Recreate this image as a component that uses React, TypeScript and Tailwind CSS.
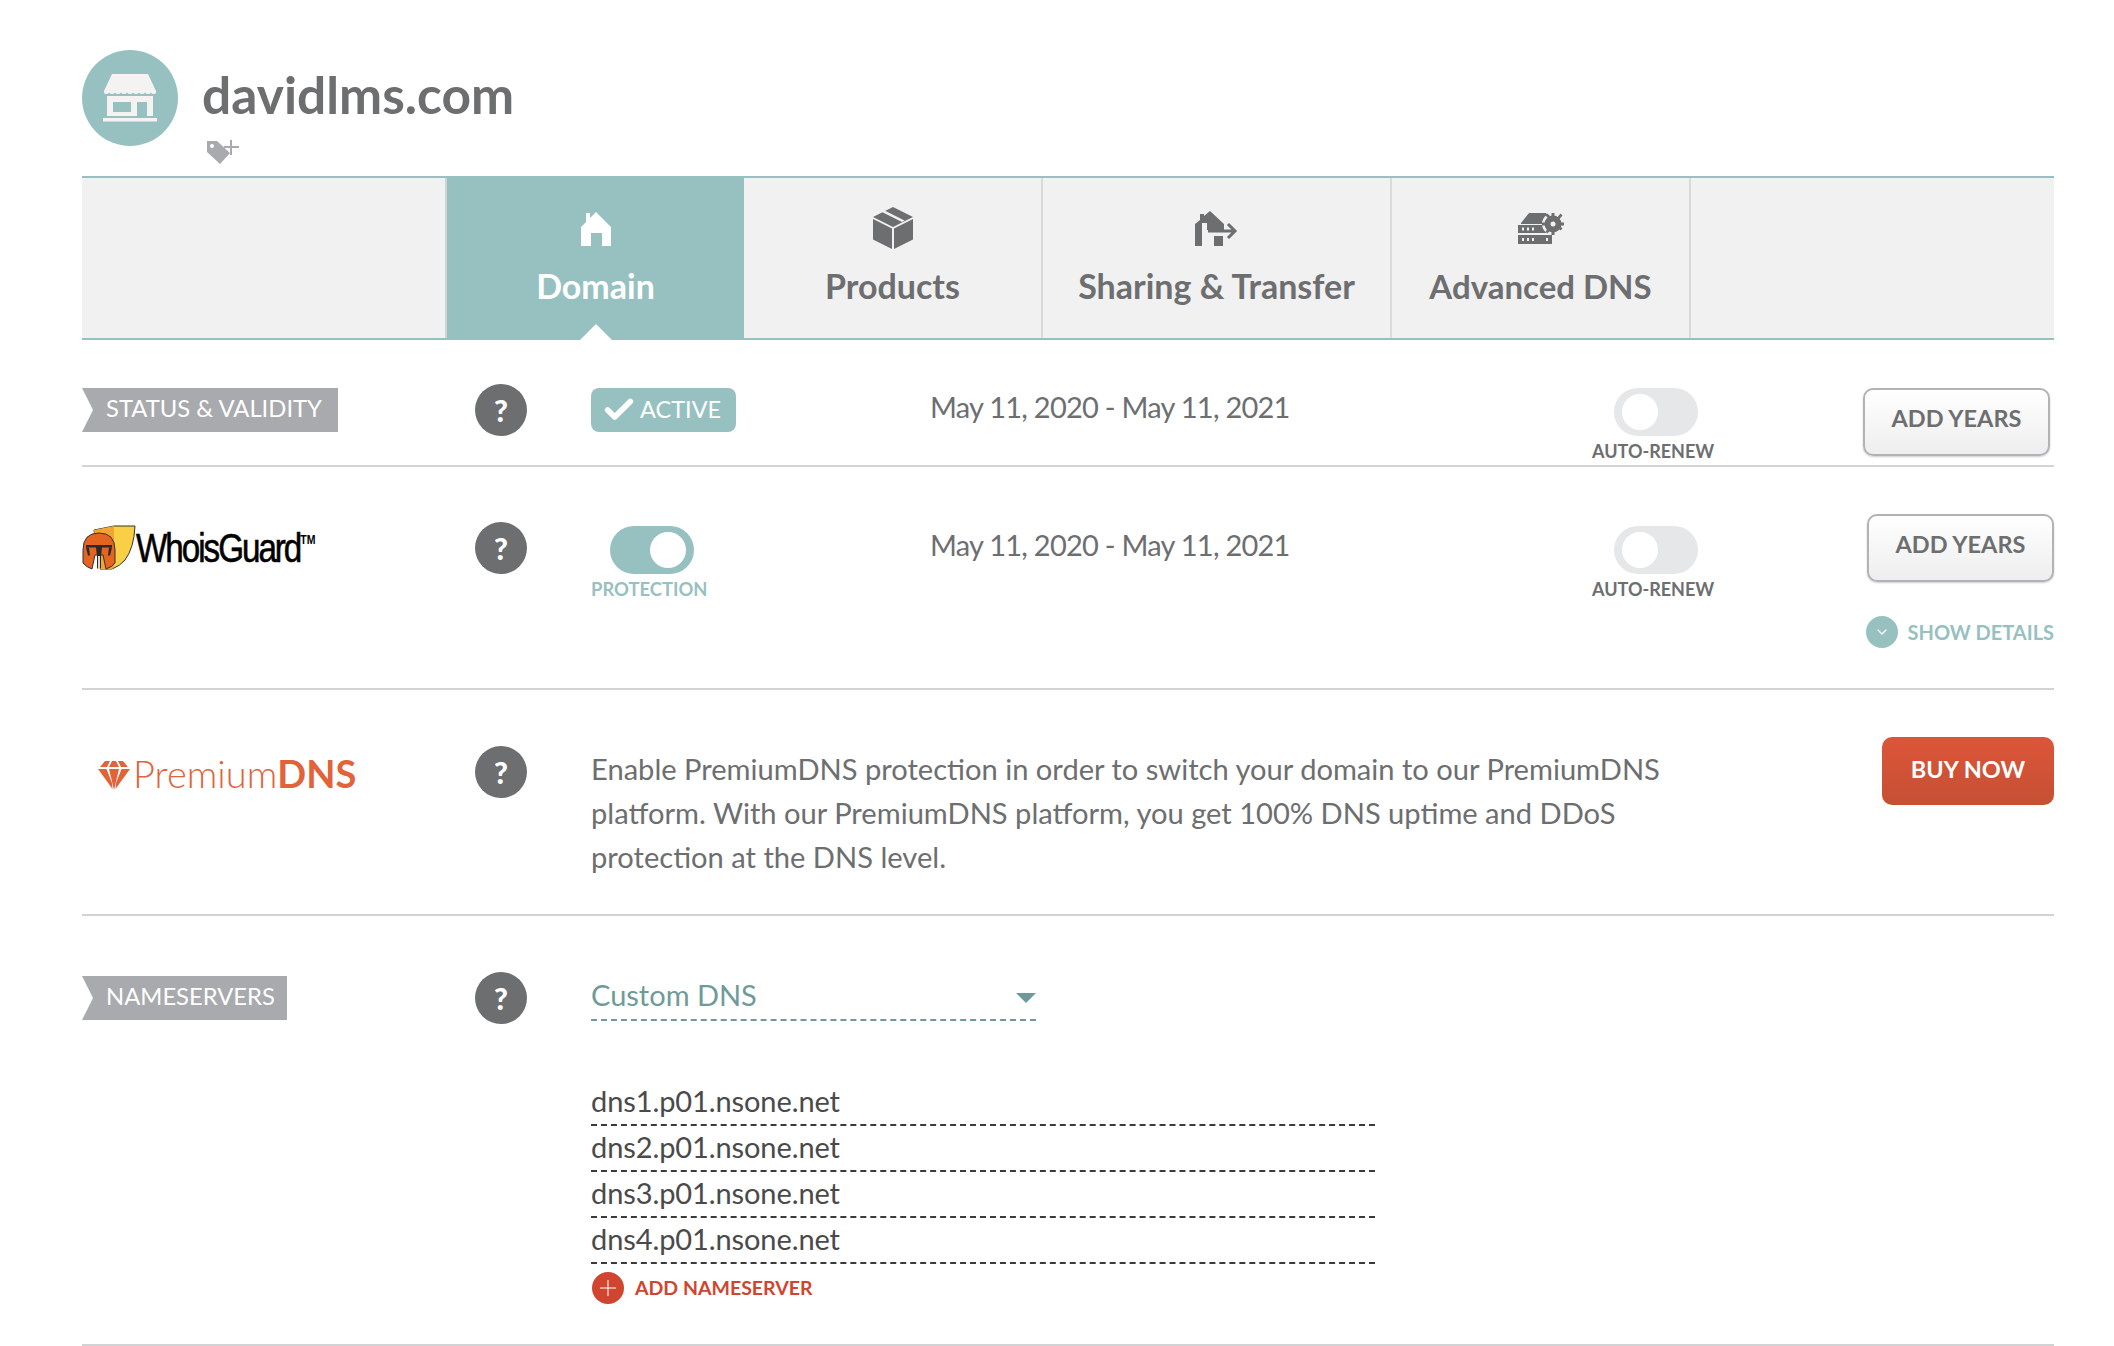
import React from 'react';
import { Check, ChevronDown, Plus } from 'lucide-react';

const StoreIcon = () => (
  <svg width="54" height="48" viewBox="0 0 54 48" fill="#f4f3f1">
    <path d="M9 0h36l8 17q.5 3-2 3-2.500 0-3-1.500-1 1.500-3 1.500t-3-1.500q-1 1.500-3 1.500t-3-1.500q-1 1.500-3 1.500t-3-1.500q-1 1.500-3 1.500t-3-1.500q-1 1.500-3 1.500t-3-1.500q-1 1.500-3 1.500t-3-1.500q-1 1.500-3 1.500t-3-1.500q-.5 1.500-3 1.500-2.500 0-2-3z" />
    <path fillRule="evenodd" d="M4 22h46v20h-6V28H34v14H4zM10 28v10h18V28z" />
    <rect x="0" y="44" width="54" height="3.500" />
  </svg>
);

const TagPlusIcon = () => (
  <svg width="34" height="26" viewBox="0 0 34 26">
    <path fillRule="evenodd" fill="#a9aaad" d="M1 2h10l13 12-10 11L1 13zM6 5a2 2 0 1 0 0 4 2 2 0 0 0 0-4z" />
    <path stroke="#a9aaad" strokeWidth="2" d="M25 1v15M18 8h15" />
  </svg>
);

const HomeIcon = () => (
  <svg width="30" height="34" viewBox="0 0 30 34" fill="#fff">
    <path d="M0 34V15L5 10V1h4v5l6-6 15 15v19H21V21H10v13z" />
  </svg>
);

const BoxIcon = () => (
  <svg width="40" height="42" viewBox="0 0 40 42" fill="#6d6e70">
    <path d="M20 0l20 10-20 10L0 10z" />
    <path d="M11.500 3.500l20 10-2.500 1.500L9 5z" fill="#f1f1f1" />
    <path d="M0 12l19 9.500V42L0 32.500zM40 12v20.500L21 42V21.500z" />
  </svg>
);

const HouseArrowIcon = () => (
  <svg width="44" height="35" viewBox="0 0 44 35" fill="#6d6e70">
    <path d="M0 35V13l5-4V3h4v2l6-5 14 13v6H12v-7H7v23z" />
    <rect x="19" y="25" width="9" height="10" />
    <path d="M13 20h26M33 13l7 7-7 7" fill="none" stroke="#6d6e70" strokeWidth="3" />
  </svg>
);

const ServerIcon = () => (
  <svg width="46" height="31" viewBox="0 0 46 31" fill="#6d6e70">
    <path d="M3 10L11 0h17l2 3-3 8H3z" />
    <path fillRule="evenodd" d="M0 12h27l3 8H0zM4 14.500v3h2v-3zM9 14.500v3h2v-3zM14 14.500v3h2v-3z" />
    <path fillRule="evenodd" d="M0 22h34v9H0zM4 25v3h2v-3zM9 25v3h2v-3zM14 25v3h2v-3zM28 25v3h2v-3z" />
    <circle cx="35" cy="11" r="11" fill="#f1f1f1" />
    <circle cx="35" cy="11" r="8.500" />
    <path d="M33.500 0h3v22h-3zM24 9.500h22v3H24zM27.500 2.500l2-2 15 15-2 2-15-15zM42.500 .5l2 2-15 18-2-2z" />
    <circle cx="35" cy="11" r="2.500" fill="#f1f1f1" />
  </svg>
);

const WhoisShield = () => (
  <svg width="54" height="46" viewBox="0 0 54 46" className="shrink-0">
    <path d="M12 5L32 1h21q-1 22-10 34-5 6-13 9H18z" fill="#f9cf45" stroke="#333" strokeWidth="1" />
    <path d="M12 5L32 1v41l-2 2H18z" fill="#f3a533" />
    <path d="M1 25Q1 8 17 8q16 0 16 17v13q-3 4-9 6l-3-14h-8l-3 14q-6-2-9-6z" fill="#e3651f" stroke="#333" strokeWidth="1" />
    <path d="M4 20h26v2.500H20l-1 9v12h-4v-12l-1-9H4z" fill="#2a2a2a" />
    <path d="M4 22.500h3l1 8H6zM30 22.500h-3l-1 8h2z" fill="#2a2a2a" />
    <path d="M16 31h2v13h-2z" fill="#d9d9d9" />
  </svg>
);

const GemIcon = () => (
  <svg width="32" height="30" viewBox="0 0 32 30" fill="#e2633a">
    <path d="M7 0h5L9 6H2zM14 0h4l3 6H11zM20 0h5l5 6h-7zM0 8h8.500l5.500 14 .5 6zM11 8h10l-5 21zM23.500 8H32L17.500 28l.5-6z" />
  </svg>
);

const HelpBadge = () => (
  <div className="w-[52px] h-[52px] rounded-full bg-[#6d6e70] flex items-center justify-center text-white text-[30px] font-black">?</div>
);

const TagLabel: React.FC<{ text: string; width: string }> = ({ text, width }) => (
  <div className={`${width} h-[44px] bg-[#a9aaad] text-white text-[23.800px] pl-[24px] pb-[2px] flex items-center [clip-path:polygon(0_0,100%_0,100%_100%,0_100%,11px_50%)]`}>
    {text}
  </div>
);

const Toggle: React.FC<{ on?: boolean }> = ({ on }) => (
  <div className={`w-[84px] h-[48px] rounded-full flex items-center px-[8px] ${on ? 'bg-[#97c1c0] justify-end' : 'bg-[#e6e7e8]'}`}>
    <div className="w-[36px] h-[36px] rounded-full bg-white" />
  </div>
);

const AddYears: React.FC<{ className?: string }> = ({ className }) => (
  <button className={`w-[187px] h-[68px] rounded-[10px] border-2 border-[#b2b3b5] bg-linear-to-b from-white to-[#eeeeee] shadow-[0_1px_2px_rgba(0,0,0,0.2)] text-[#6d6e70] text-[23.5px] font-bold pb-[6px] ${className ?? ''}`}>
    ADD YEARS
  </button>
);

const AutoRenew = () => (
  <div className="w-[122px] shrink-0">
    <div className="ml-[22px]"><Toggle /></div>
    <div className="mt-[3px] text-[18px] font-bold text-[#6d6e70] whitespace-nowrap leading-[24px]">AUTO-RENEW</div>
  </div>
);

const tabs = [
  { label: 'Domain', icon: HomeIcon, width: 'w-[297px]', active: true, text: 'text-[34px]' },
  { label: 'Products', icon: BoxIcon, width: 'w-[299px]', text: 'text-[34px]' },
  { label: 'Sharing & Transfer', icon: HouseArrowIcon, width: 'w-[349px]', text: 'text-[34px]' },
  { label: 'Advanced DNS', icon: ServerIcon, width: 'w-[299px]', text: 'text-[33px]' },
];

const nameservers = ['dns1.p01.nsone.net', 'dns2.p01.nsone.net', 'dns3.p01.nsone.net', 'dns4.p01.nsone.net'];

export default function App() {
  return (
    <div className="bg-white min-h-[1346px] pl-[82px] pr-[60px] pt-[50px] font-['Lato',sans-serif] text-[#6d6e70]">
      {/* Header */}
      <div className="flex h-[126px]">
        <div className="w-[96px] h-[96px] rounded-full bg-[#97c1c0] flex items-center justify-center shrink-0">
          <StoreIcon />
        </div>
        <div className="ml-[24px]">
          <h1 className="text-[51.5px] font-bold leading-[88px] h-[89px]">davidlms.com</h1>
          <div className="ml-[4px]"><TagPlusIcon /></div>
        </div>
      </div>

      {/* Tabs */}
      <div className="flex h-[164px] bg-[#f1f1f1] border-y-2 border-[#97c1c0]">
        <div className="w-[365px] border-r-2 border-[#d2d3d4]" />
        {tabs.map((tab) => (
          <div
            key={tab.label}
            className={`${tab.width} relative flex flex-col items-center ${tab.active ? 'bg-[#97c1c0] text-white -my-[2px] pt-[36px]' : 'border-r-2 border-[#d9dada] pt-[28px]'}`}
          >
            <div className={`flex items-center justify-center ${tab.active ? 'h-[34px]' : 'h-[44px]'}`}>
              <tab.icon />
            </div>
            <div className={`${tab.text} font-bold leading-[40px] whitespace-nowrap ${tab.active ? 'mt-[20px]' : 'mt-[16px]'}`}>{tab.label}</div>
            {tab.active && (
              <div className="absolute bottom-0 left-1/2 -translate-x-1/2 w-0 h-0 border-x-[16px] border-x-transparent border-b-[16px] border-b-white" />
            )}
          </div>
        ))}
      </div>

      {/* Status row */}
      <div className="flex h-[127px] border-b-2 border-[#d2d3d4]">
        <div className="w-[393px] shrink-0 pt-[48px]"><TagLabel text="STATUS & VALIDITY" width="w-[256px]" /></div>
        <div className="w-[116px] shrink-0 pt-[44px]"><HelpBadge /></div>
        <div className="w-[339px] shrink-0 pt-[48px]">
          <div className="w-[145px] h-[44px] rounded-[8px] bg-[#97c1c0] text-white text-[23.5px] flex items-center pl-[11px] gap-[4px] pb-[1px]">
            <Check size={34} strokeWidth={4} />
            ACTIVE
          </div>
        </div>
        <div className="w-[662px] shrink-0 pt-[45px] text-[29px] tracking-[-0.75px] leading-[44px]">May 11, 2020 - May 11, 2021</div>
        <div className="pt-[48px]"><AutoRenew /></div>
        <div className="flex-1 pt-[48px] flex justify-end pr-[4px]"><AddYears /></div>
      </div>

      {/* WhoisGuard row */}
      <div className="flex h-[223px] border-b-2 border-[#d2d3d4]">
        <div className="w-[393px] shrink-0 pt-[58px] flex items-start">
          <WhoisShield />
          <span className="font-['Liberation_Sans',sans-serif] text-[41px] leading-[46px] text-black tracking-[-2.5px] origin-left scale-x-[0.81] whitespace-nowrap [-webkit-text-stroke:0.6px_black]">
            WhoisGuard<sup className="text-[13px] font-bold tracking-normal -top-[18px] [-webkit-text-stroke:0px]">TM</sup>
          </span>
        </div>
        <div className="w-[116px] shrink-0 pt-[55px]"><HelpBadge /></div>
        <div className="w-[339px] shrink-0 pt-[59px]">
          <div className="ml-[19px]"><Toggle on /></div>
          <div className="mt-[3px] text-[18.400px] font-bold text-[#97c1c0] leading-[24px]">PROTECTION</div>
        </div>
        <div className="w-[662px] shrink-0 pt-[56px] text-[29px] tracking-[-0.75px] leading-[44px]">May 11, 2020 - May 11, 2021</div>
        <div className="pt-[59px]"><AutoRenew /></div>
        <div className="flex-1 pt-[47px] flex flex-col items-end">
          <AddYears />
          <div className="mt-[34px] flex items-center gap-[10px]">
            <div className="w-[32px] h-[32px] rounded-full bg-[#97c1c0] flex items-center justify-center text-white"><ChevronDown size={16} /></div>
            <span className="text-[20px] font-bold text-[#97c1c0] whitespace-nowrap">SHOW DETAILS</span>
          </div>
        </div>
      </div>

      {/* PremiumDNS row */}
      <div className="flex h-[226px] border-b-2 border-[#d2d3d4]">
        <div className="w-[393px] shrink-0 pt-[66px] pl-[16px] flex items-start gap-[3px]">
          <div className="pt-[5px]"><GemIcon /></div>
          <span className="text-[38px] leading-[34px] text-[#e2633a] font-light whitespace-nowrap">Premium<span className="font-bold">DNS</span></span>
        </div>
        <div className="w-[116px] shrink-0 pt-[56px]"><HelpBadge /></div>
        <div className="w-[1100px] shrink-0 pt-[57px] text-[29.100px] leading-[44px]">
          Enable PremiumDNS protection in order to switch your domain to our PremiumDNS platform. With our PremiumDNS platform, you get 100% DNS uptime and DDoS protection at the DNS level.
        </div>
        <div className="flex-1 pt-[47px] flex justify-end">
          <button className="w-[172px] h-[68px] rounded-[10px] bg-linear-to-b from-[#dc553a] to-[#c65033] text-white text-[23.5px] font-bold pb-[2px]">BUY NOW</button>
        </div>
      </div>

      {/* Nameservers row */}
      <div className="flex h-[430px] border-b-2 border-[#d2d3d4]">
        <div className="w-[393px] shrink-0 pt-[60px]"><TagLabel text="NAMESERVERS" width="w-[205px]" /></div>
        <div className="w-[116px] shrink-0 pt-[56px]"><HelpBadge /></div>
        <div className="pt-[58px]">
          <div className="w-[445px] h-[47px] border-b-2 border-dashed border-[#6f9a9a] flex items-center justify-between text-[#6f9a9a] text-[29px] pb-[3px]">
            Custom DNS
            <div className="w-0 h-0 border-x-[10px] border-x-transparent border-t-[10px] border-t-[#6f9a9a] mt-[6px]" />
          </div>
          <div className="mt-[59px] w-[784px]">
            {nameservers.map((ns) => (
              <div key={ns} className="h-[46px] border-b-2 border-dashed border-[#3b3b3b] text-[29px] leading-[42px] tracking-[-0.1px] text-[#4a4a4a]">{ns}</div>
            ))}
          </div>
          <div className="mt-[8px] flex items-center gap-[11px] pl-[1px]">
            <div className="w-[32px] h-[32px] rounded-full bg-[#d0452f] flex items-center justify-center text-white"><Plus size={26} strokeWidth={1} /></div>
            <span className="text-[19.500px] font-bold text-[#d0452f] whitespace-nowrap">ADD NAMESERVER</span>
          </div>
        </div>
      </div>
    </div>
  );
}
